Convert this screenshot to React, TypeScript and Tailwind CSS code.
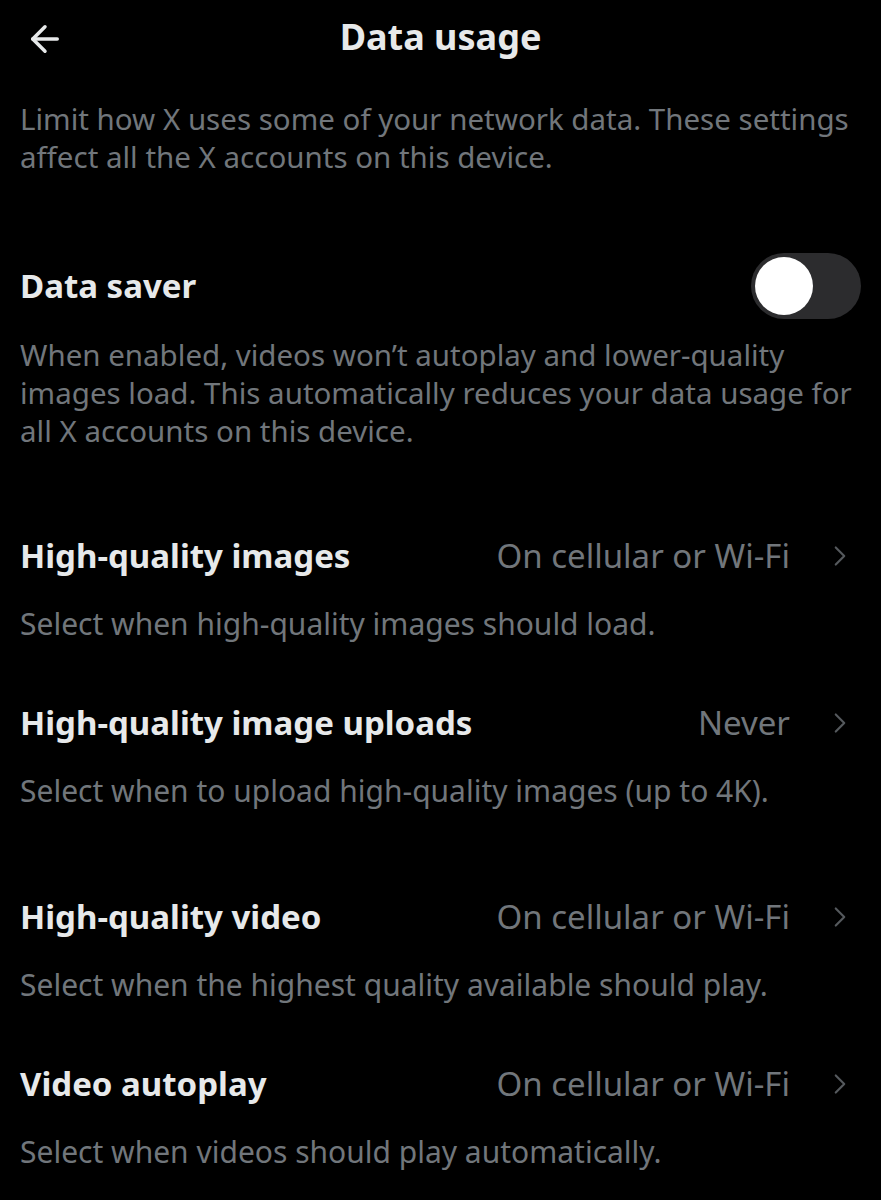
import { ArrowLeft, ChevronRight } from 'lucide-react';

const rows = [
  { title: 'High-quality images', value: 'On cellular or Wi-Fi', sub: 'Select when high-quality images should load.', pad: 'mt-0' },
  { title: 'High-quality image uploads', value: 'Never', sub: 'Select when to upload high-quality images (up to 4K).', pad: 'mt-[60px]' },
  { title: 'High-quality video', value: 'On cellular or Wi-Fi', sub: 'Select when the highest quality available should play.', pad: 'mt-[87px]' },
  { title: 'Video autoplay', value: 'On cellular or Wi-Fi', sub: 'Select when videos should play automatically.', pad: 'mt-[60px]' },
];

const SettingRow = ({ title, value, sub, pad }: { title: string; value: string; sub: string; pad: string }) => (
  <div className={`flex flex-col ${pad}`}>
    <div className="flex items-center h-[40px]">
      <span className="flex-1 text-[#e7e9ea] font-bold text-[33px] leading-[40px]">{title}</span>
      <span className="text-[#71767b] text-[33px] leading-[40px]">{value}</span>
      <ChevronRight className="ml-[33px] mr-[4px] text-[#55595d]" size={34} strokeWidth={1.5} />
    </div>
    <p className="text-[#71767b] text-[30px] leading-[38px] mt-[29px]">{sub}</p>
  </div>
);

export default function App() {
  return (
    <div className="min-h-[1200px] w-[881px] bg-black px-[20px] font-['Noto_Sans',sans-serif]">
      <header className="relative flex items-center h-[78px]">
        <ArrowLeft className="text-[#e7e9ea] ml-[4px]" size={42} strokeWidth={2} />
        <h1 className="absolute left-0 right-0 text-center text-[#e7e9ea] font-bold text-[36px] leading-[44px] -translate-y-[2px] pointer-events-none">Data usage</h1>
      </header>
      <p className="text-[#71767b] text-[29.5px] leading-[38px] mt-[22px]">
        Limit how X uses some of your network data. These settings affect all the X accounts on this device.
      </p>

      <div className="flex items-center justify-between mt-[77px] h-[66px]">
        <span className="text-[#e7e9ea] font-bold text-[33px]">Data saver</span>
        <div className="w-[110px] h-[66px] rounded-full bg-[#2c2c2e] p-[4px] flex items-center">
          <div className="w-[58px] h-[58px] rounded-full bg-white" />
        </div>
      </div>
      <p className="text-[#71767b] text-[29.5px] leading-[38px] mt-[17px]">
        When enabled, videos won’t autoplay and lower-quality images load. This automatically reduces your data usage for all X accounts on this device.
      </p>

      <div className="mt-[86px]">
        {rows.map((r) => (
          <SettingRow key={r.title} {...r} />
        ))}
      </div>
    </div>
  );
}
